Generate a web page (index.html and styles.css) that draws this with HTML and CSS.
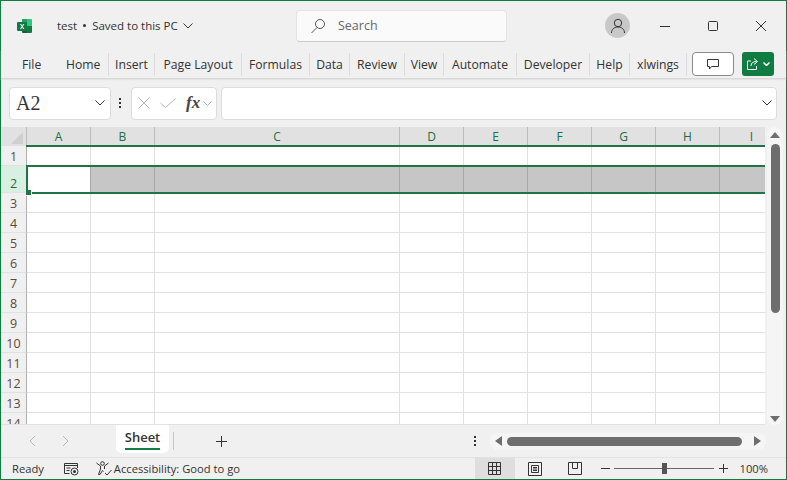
FILE: index.html
```html
<!DOCTYPE html>
<html>
<head>
	<meta charset="utf-8">
	<meta name="viewport" content="width=device-width,initial-scale=1">
	<title>test - Excel</title>
	<link rel="stylesheet" href="styles.css">
</head>
<body>
	<div class="win">
		<header class="title">
			<svg class="logo" viewBox="0 0 16 16" width="16" height="16">
				<path d="M5 1h5v7H5z" fill="#21a366"></path>
				<path d="M10 1h4a1 1 0 0 1 1 1v6h-5z" fill="#33c481"></path>
				<path d="M5 8h5v7H6a1 1 0 0 1-1-1z" fill="#185c37"></path>
				<path d="M10 8h5v6a1 1 0 0 1-1 1h-4z" fill="#107c41"></path>
				<rect x="0" y="4" width="10" height="9" rx="1" fill="#107c41"></rect>
				<path d="M3 6l1.600 2.500L3 11h1.200l1-1.700 1 1.700h1.200L5.800 8.500 7.400 6H6.200l-1 1.700-1-1.700z" fill="#fff"></path>
			</svg>
			<div class="doc">test <span class="dot"></span> Saved to this PC
				<svg viewBox="0 0 10 6" width="10" height="6"><path d="M.5.500 5 5 9.500.500" class="ln"></path></svg>
			</div>
			<div class="search">
				<svg viewBox="0 0 16 16" width="16" height="16"><circle cx="10" cy="6" r="4.500" class="ln"></circle><path d="M7 9.500 1.500 15" class="ln"></path></svg>
				<span>Search</span>
			</div>
			<div class="avatar">
				<svg viewBox="0 0 16 16" width="16" height="16"><circle cx="8" cy="5" r="3.700" class="ln"></circle><path d="M1.500 15c0-3.500 2.500-6 6.500-6s6.500 2.500 6.500 6" class="ln"></path></svg>
			</div>
			<div class="wbtns">
				<svg viewBox="0 0 12 12" width="12" height="12"><path d="M1 6.500h10" class="ln"></path></svg>
				<svg viewBox="0 0 12 12" width="12" height="12"><rect x="1.500" y="1.500" width="9" height="9" rx="1" class="ln"></rect></svg>
				<svg viewBox="0 0 12 12" width="12" height="12"><path d="M1 1l10 10M11 1 1 11" class="ln"></path></svg>
			</div>
		</header>

		<nav class="tabs">
			<a class="file">File</a>
			<a>Home</a>
			<a>Insert</a>
			<a>Page Layout</a>
			<a>Formulas</a>
			<a>Data</a>
			<a>Review</a>
			<a>View</a>
			<a>Automate</a>
			<a>Developer</a>
			<a>Help</a>
			<a>xlwings</a>
			<div class="comment">
				<svg viewBox="0 0 12 11" width="12" height="11"><path d="M.500.500h11v7H4.500l-2 2.500V7.500h-2z" class="ln"></path></svg>
			</div>
			<div class="share">
				<svg viewBox="0 0 14 14" width="14" height="14"><path d="M5 4H1.500v8.500h9V9M5 9c0-3 2-4.500 5.500-4.500M8 1.500l3.500 3-3.500 3" class="ln lw"></path></svg>
				<svg viewBox="0 0 7 4" width="7" height="4"><path d="M.500.500 3.500 3.500 6.500.500" class="ln lw thick"></path></svg>
			</div>
		</nav>

		<div class="fbar">
			<div class="box name">
				<span>A2</span>
				<svg viewBox="0 0 10 6" width="10" height="6"><path d="M.500.500 5 5 9.500.500" class="ln"></path></svg>
			</div>
			<div class="vdots"><i></i><i></i><i></i></div>
			<div class="box fx">
				<svg viewBox="0 0 12 12" width="12" height="12"><path d="M.500.500l11 11M11.500.500l-11 11" class="ln lg"></path></svg>
				<svg viewBox="0 0 16 10" width="16" height="10"><path d="M.500 5l5 4.500 10-9" class="ln lg"></path></svg>
				<em>fx</em>
				<svg viewBox="0 0 9 5" width="9" height="5"><path d="M.500.500l4 4 4-4" class="ln lg"></path></svg>
			</div>
			<div class="box input">
				<svg viewBox="0 0 10 6" width="10" height="6"><path d="M.500.500 5 5 9.500.500" class="ln"></path></svg>
			</div>
		</div>

		<div class="main">
			<div class="sheet">
				<table>
					<colgroup>
						<col class="c-h"><col class="c-n"><col class="c-n"><col class="c-w"><col class="c-n"><col class="c-n"><col class="c-n"><col class="c-n"><col class="c-n"><col class="c-n">
					</colgroup>
					<tr class="heads">
						<th class="corner"><span></span></th><th>A</th><th>B</th><th>C</th><th>D</th><th>E</th><th>F</th><th>G</th><th>H</th><th>I</th>
					</tr>
					<tr><th>1</th><td></td><td></td><td></td><td></td><td></td><td></td><td></td><td></td><td></td></tr>
					<tr class="on"><th>2</th><td class="active"></td><td></td><td></td><td></td><td></td><td></td><td></td><td></td><td></td></tr>
					<tr><th>3</th><td></td><td></td><td></td><td></td><td></td><td></td><td></td><td></td><td></td></tr>
					<tr><th>4</th><td></td><td></td><td></td><td></td><td></td><td></td><td></td><td></td><td></td></tr>
					<tr><th>5</th><td></td><td></td><td></td><td></td><td></td><td></td><td></td><td></td><td></td></tr>
					<tr><th>6</th><td></td><td></td><td></td><td></td><td></td><td></td><td></td><td></td><td></td></tr>
					<tr><th>7</th><td></td><td></td><td></td><td></td><td></td><td></td><td></td><td></td><td></td></tr>
					<tr><th>8</th><td></td><td></td><td></td><td></td><td></td><td></td><td></td><td></td><td></td></tr>
					<tr><th>9</th><td></td><td></td><td></td><td></td><td></td><td></td><td></td><td></td><td></td></tr>
					<tr><th>10</th><td></td><td></td><td></td><td></td><td></td><td></td><td></td><td></td><td></td></tr>
					<tr><th>11</th><td></td><td></td><td></td><td></td><td></td><td></td><td></td><td></td><td></td></tr>
					<tr><th>12</th><td></td><td></td><td></td><td></td><td></td><td></td><td></td><td></td><td></td></tr>
					<tr><th>13</th><td></td><td></td><td></td><td></td><td></td><td></td><td></td><td></td><td></td></tr>
					<tr><th>14</th><td></td><td></td><td></td><td></td><td></td><td></td><td></td><td></td><td></td></tr>
				</table>
				<div class="sel-top"></div>
				<div class="sel-row"></div>
				<div class="sel-handle"></div>
			</div>
			<div class="vscroll">
				<span class="tri up"></span>
				<div class="vtrack"><div class="thumb"></div></div>
				<span class="tri down"></span>
			</div>
		</div>

		<div class="sheets">
			<svg class="nav" viewBox="0 0 7 12" width="7" height="12"><path d="M6 1 1 6l5 5" class="ln lg"></path></svg>
			<svg class="nav nav2" viewBox="0 0 7 12" width="7" height="12"><path d="M1 1l5 5-5 5" class="ln lg"></path></svg>
			<div class="tab"><span>Sheet</span></div>
			<div class="sep"></div>
			<svg class="plus" viewBox="0 0 11 11" width="11" height="11"><path d="M5.500 0v11M0 5.500h11" class="ln"></path></svg>
			<div class="vdots sdots"><i></i><i></i><i></i></div>
			<div class="hscroll">
				<span class="tri left"></span>
				<div class="hthumb"></div>
				<span class="tri right"></span>
			</div>
		</div>

		<footer class="status">
			<span class="ready">Ready</span>
			<svg class="macro" viewBox="0 0 15 14" width="15" height="14">
				<path d="M.500 1.500h13M.500 3.500h13M.500 1.500v10h5M13.500 1.500V6M2.500 6h4M2.500 8.500h3" class="ln"></path>
				<circle cx="10.500" cy="9.500" r="3.500" class="ln"></circle>
				<circle cx="10.500" cy="9.500" r="1.500" fill="#333"></circle>
			</svg>
			<svg class="acc" viewBox="0 0 16 15" width="16" height="15">
				<circle cx="6.500" cy="2.500" r="1.800" class="ln"></circle>
				<path d="M.500 2l4 3v3l-2 5.500h1.500l2.500-4 1 1M12.500 2l-4 3v3M9 12l2 2 4.500-5" class="ln"></path>
			</svg>
			<span class="acctext">Accessibility: Good to go</span>
			<div class="views">
				<div class="vw cur">
					<svg viewBox="0 0 13 13" width="13" height="13"><path d="M.500.500h12v12H.500zM4.500.500v12M8.500.500v12M.500 4.500h12M.500 8.500h12" class="ln"></path></svg>
				</div>
				<div class="vw">
					<svg viewBox="0 0 14 14" width="14" height="14"><path d="M.500.500h13v13H.500zM3.500 3.500h7v7h-7zM5 5.500h4M5 7h4M5 8.500h4" class="ln"></path></svg>
				</div>
				<div class="vw">
					<svg viewBox="0 0 14 13" width="14" height="13"><path d="M.500.500h13v12H.500zM4.500.500v6h5v-6" class="ln"></path></svg>
				</div>
			</div>
			<div class="zoom">
				<span class="zm"></span>
				<div class="slider"><span class="knob"></span></div>
				<svg viewBox="0 0 9 9" width="9" height="9"><path d="M4.500 0v9M0 4.500h9" class="ln"></path></svg>
				<span class="pct">100%</span>
			</div>
		</footer>
	</div>
</body>
</html>
```

FILE: styles.css
```css
* {
	margin: 0;
	padding: 0;
	box-sizing: border-box;
}
html, body {
	height: 100%;
	overflow: hidden;
}
body {
	font-family: "Open Sans", "Noto Sans", sans-serif;
	font-size: 12px;
	color: #333;
}
svg {
	display: block;
	flex: none;
}
.ln {
	fill: none;
	stroke: #333;
	stroke-width: 1;
}
.lg {
	stroke: #b5b5b5;
}
.lw {
	stroke: #fff;
}
.thick {
	stroke-width: 1.500;
}
.win {
	width: 787px;
	height: 480px;
	border: 1px solid #107c41;
	background: #f0f0f0;
	display: flex;
	flex-direction: column;
}

/* title bar */
.title {
	height: 49px;
	flex: none;
	display: flex;
	align-items: center;
	padding-left: 16px;
}
.doc {
	margin-left: 24px;
	width: 239px;
	display: flex;
	align-items: center;
	gap: 5px;
	font-size: 11.500px;
}
.dot {
	width: 3px;
	height: 3px;
	border-radius: 50%;
	background: #333;
	margin: 0 1px;
}
.search {
	width: 211px;
	height: 32px;
	background: #fafafa;
	border: 1px solid #e3e3e3;
	border-bottom-color: #ccc;
	border-radius: 4px;
	display: flex;
	align-items: center;
	padding-left: 13px;
	gap: 12px;
	color: #666;
	font-size: 12.500px;
}
.search .ln {
	stroke: #555;
}
.avatar {
	width: 25px;
	height: 25px;
	border-radius: 50%;
	background: #c8c8c8;
	margin-left: 98px;
	display: flex;
	align-items: center;
	justify-content: center;
}
.wbtns {
	display: flex;
	gap: 36px;
	margin-left: 29px;
}

/* ribbon tabs */
.tabs {
	height: 29px;
	flex: none;
	display: flex;
	align-items: center;
	padding-left: 21px;
	font-size: 12.200px;
	white-space: nowrap;
	border-bottom: 1px solid #d8d8d8;
	box-shadow: 0 1px 1px #e4e4e4;
}
.tabs a {
	height: 23px;
	line-height: 23px;
	text-align: center;
	border-right: 1px solid #dcdcdc;
}
.tabs a.file {
	border: none;
	width: 44px;
	text-align: left;
}
.tabs a:nth-child(2) {
	width: 43px;
	text-align: left;
}
.tabs a:nth-child(3) {
	width: 46px;
}
.tabs a:nth-child(4) {
	width: 87px;
}
.tabs a:nth-child(5) {
	width: 68px;
}
.tabs a:nth-child(6) {
	width: 40px;
}
.tabs a:nth-child(7) {
	width: 55px;
}
.tabs a:nth-child(8) {
	width: 39px;
}
.tabs a:nth-child(9) {
	width: 73px;
}
.tabs a:nth-child(10) {
	width: 73px;
}
.tabs a:nth-child(11) {
	width: 40px;
}
.tabs a:nth-child(12) {
	width: 57px;
}
.comment {
	width: 42px;
	height: 24px;
	margin-left: 5px;
	background: #fff;
	border: 1px solid #8a8a8a;
	border-radius: 4px;
	display: flex;
	align-items: center;
	justify-content: center;
}
.share {
	width: 32px;
	height: 24px;
	margin-left: 8px;
	background: #107c41;
	border-radius: 3px;
	display: flex;
	align-items: center;
	justify-content: center;
	gap: 3px;
}

/* formula bar */
.fbar {
	height: 48px;
	flex: none;
	display: flex;
	align-items: center;
	padding: 0 9px 0 8px;
}
.box {
	height: 33px;
	background: #fff;
	border: 1px solid #dcdcdc;
	border-radius: 4px;
	display: flex;
	align-items: center;
}
.name {
	width: 102px;
	justify-content: space-between;
	padding: 0 5px 0 6px;
	font-family: "Liberation Serif", serif;
	font-size: 20px;
}
.vdots {
	width: 4px;
	margin: 0 8px;
	display: flex;
	flex-direction: column;
	gap: 2px;
}
.vdots i {
	width: 2px;
	height: 2px;
	background: #333;
}
.fx {
	width: 86px;
	padding-left: 6px;
}
.fx em {
	font-family: "Liberation Serif", serif;
	font-size: 17px;
	font-weight: bold;
	color: #444;
	margin: 0 3px 0 10px;
}
.fx svg:nth-child(2) {
	margin-left: 10px;
}
.input {
	flex: 1;
	margin-left: 4px;
	justify-content: flex-end;
	padding-right: 4px;
}

/* sheet */
.main {
	height: 298px;
	flex: none;
	display: flex;
}
.sheet {
	width: 764px;
	position: relative;
	overflow: hidden;
	background: #fff;
	border-bottom: 1px solid #e1e1e1;
}
table {
	border-collapse: separate;
	border-spacing: 0;
	table-layout: fixed;
	width: 782px;
}
.c-h {
	width: 26px;
}
.c-n {
	width: 64px;
}
.c-w {
	width: 245px;
}
tr {
	height: 20px;
}
td {
	border-right: 1px solid #e1e1e1;
	border-bottom: 1px solid #e1e1e1;
}
th {
	font-weight: normal;
	font-size: 12.500px;
	line-height: 16px;
	vertical-align: bottom;
	background: #f0f0f0;
	color: #5a4a3a;
	border-right: 1px solid #b0b0b0;
	border-bottom: 1px solid #e1e1e1;
}
tr.heads {
	height: 19px;
}
.heads th {
	font-size: 12px;
	vertical-align: middle;
	background: #e1e1e1;
	color: #1e6e42;
	border-right: 1px solid #bcbcbc;
	border-bottom: none;
}
.corner {
	position: relative;
}
.corner span {
	position: absolute;
	right: 3px;
	bottom: 2px;
	width: 12px;
	height: 12px;
	background: #cfcfcf;
	clip-path: polygon(100% 0, 100% 100%, 0 100%);
}
tr.on {
	height: 27px;
}
.on th {
	background: #d8f0e1;
	color: #1e6e42;
}
.on td {
	background: #c6c6c6;
	border-right-color: #a8a8a8;
	border-bottom: none;
}
.on td.active {
	background: #fff;
	border-right-color: #a8a8a8;
}

/* selection marks */
.sel-top {
	position: absolute;
	left: 25px;
	right: 0;
	top: 18px;
	height: 2px;
	background: #217346;
}
.sel-row {
	position: absolute;
	left: 25px;
	right: 0;
	top: 38px;
	height: 29px;
	border: 2px solid #217346;
	border-right: none;
}
.sel-handle {
	position: absolute;
	left: 25px;
	top: 63px;
	width: 6px;
	height: 6px;
	background: #217346;
	border: 1px solid #fff;
	border-width: 0 1px 1px 0;
}

/* scrollbars */
.vscroll {
	width: 16px;
	margin-left: 2px;
	background: #f5f5f5;
	border-radius: 8px;
	display: flex;
	flex-direction: column;
	align-items: center;
	padding: 5px 0 3px;
}
.vtrack {
	flex: 1;
	width: 9px;
	padding-top: 6px;
}
.thumb {
	height: 169px;
	background: #6e6e6e;
	border-radius: 5px;
}
.tri {
	width: 0;
	height: 0;
	flex: none;
	border-style: solid;
	border-color: transparent;
}
.up {
	border-width: 0 5px 6px;
	border-bottom-color: #6e6e6e;
}
.down {
	border-width: 6px 5px 0;
	border-top-color: #6e6e6e;
}
.left {
	border-width: 5px 7px 5px 0;
	border-right-color: #6e6e6e;
}
.right {
	border-width: 5px 0 5px 7px;
	border-left-color: #6e6e6e;
}

/* sheet tabs */
.sheets {
	height: 32px;
	flex: none;
	display: flex;
	align-items: center;
}
.nav {
	margin-left: 28px;
}
.nav2 {
	margin-left: 26px;
}
.tab {
	width: 53px;
	height: 28px;
	margin-left: 47px;
	align-self: flex-start;
	background: #fff;
	border-radius: 0 0 5px 5px;
	display: flex;
	justify-content: center;
	font-size: 13px;
	font-weight: 600;
	color: #333;
}
.tab span {
	height: 23px;
	line-height: 20px;
	margin-top: 2px;
	border-bottom: 2px solid #107c41;
}
.sep {
	width: 1px;
	height: 18px;
	background: #c8c8c8;
	margin-left: 4px;
}
.plus {
	margin-left: 42px;
}
.sdots {
	margin: 0 0 0 247px;
}
.hscroll {
	width: 276px;
	height: 17px;
	margin-left: 12px;
	background: #f5f5f5;
	border-radius: 8px;
	display: flex;
	align-items: center;
	padding: 0 5px;
}
.hthumb {
	flex: 1;
	height: 9px;
	margin: 0 12px 0 5px;
	background: #6e6e6e;
	border-radius: 5px;
}

/* status bar */
.status {
	flex: 1;
	min-height: 0;
	display: flex;
	align-items: center;
	padding-left: 11px;
	font-size: 11.200px;
	border-top: 1px solid #e2e2e2;
}
.macro {
	margin-left: 20px;
}
.acc {
	margin-left: 17px;
}
.acctext {
	margin-left: 2px;
}
.views {
	display: flex;
	align-self: stretch;
	margin-left: auto;
}
.vw {
	width: 40px;
	display: flex;
	align-items: center;
	justify-content: center;
}
.vw.cur {
	background: #dedede;
}
.zoom {
	display: flex;
	align-items: center;
	margin: 0 18px 0 6px;
}
.zm {
	width: 9px;
	height: 1px;
	background: #333;
}
.slider {
	width: 100px;
	height: 1px;
	margin: 0 5px 0 4px;
	background: #666;
	position: relative;
}
.knob {
	position: absolute;
	left: 48px;
	top: -5px;
	width: 5px;
	height: 11px;
	background: #555;
}
.pct {
	margin-left: 12px;
}
```
